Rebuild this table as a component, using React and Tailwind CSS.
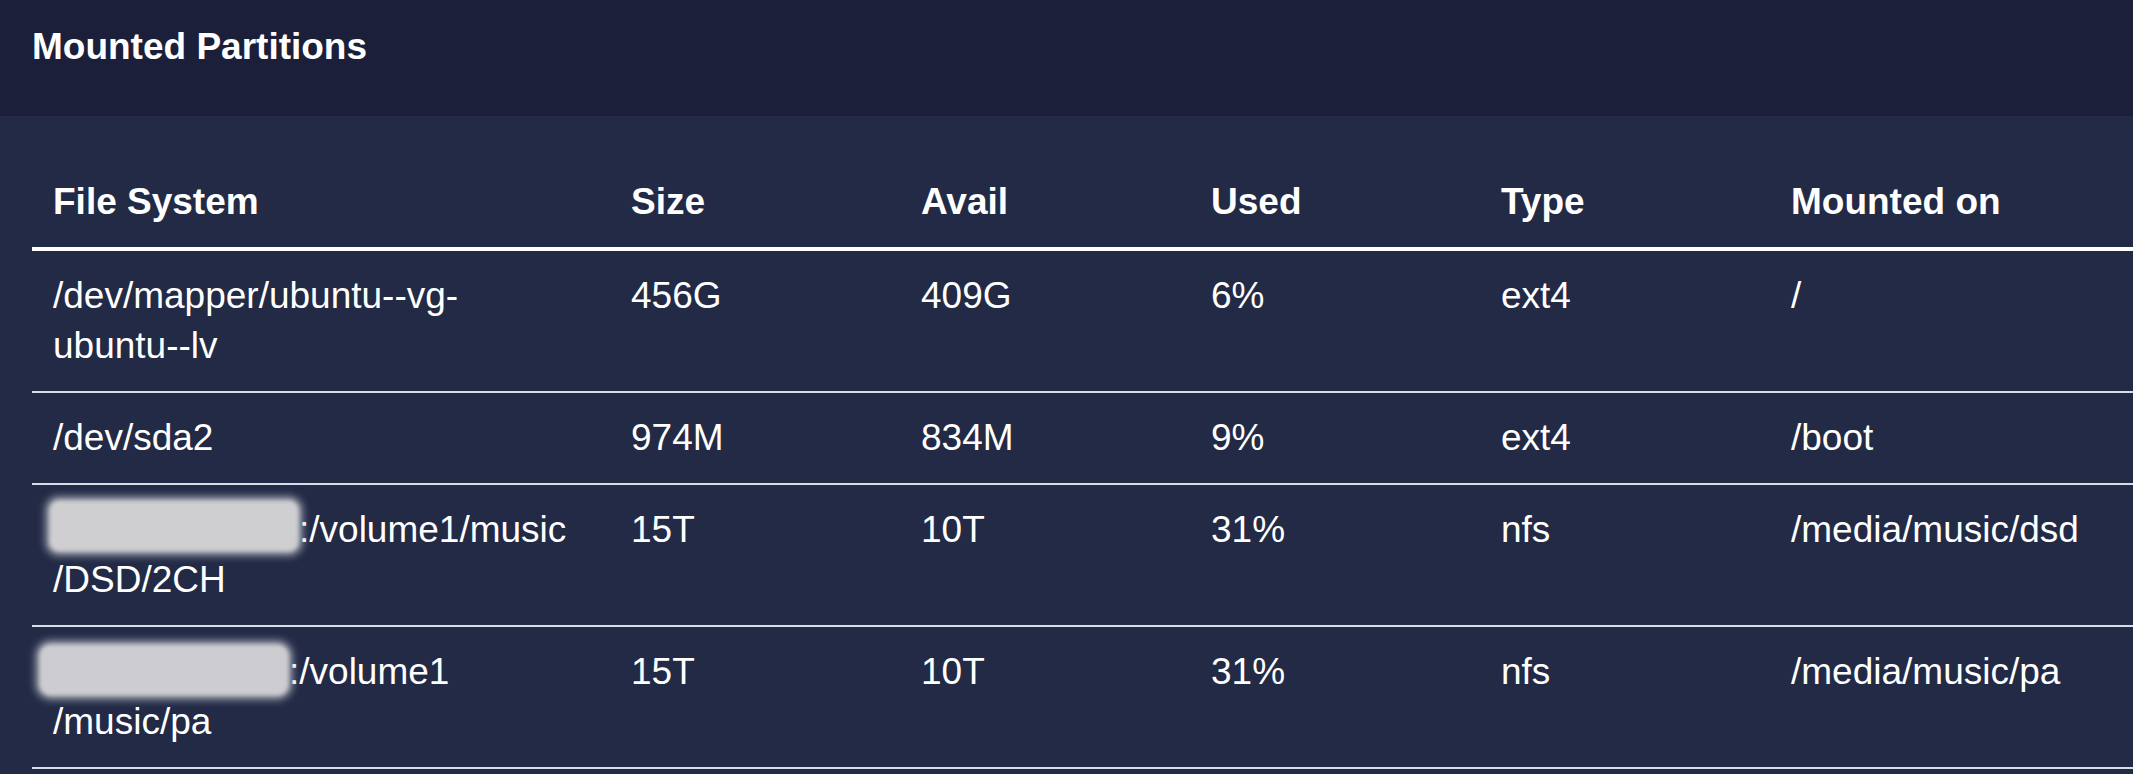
import React from 'react';

const rows = [
  {
    fs: ['/dev/mapper/ubuntu--vg-', 'ubuntu--lv'],
    size: '456G',
    avail: '409G',
    used: '6%',
    type: 'ext4',
    mount: '/',
  },
  {
    fs: ['/dev/sda2'],
    size: '974M',
    avail: '834M',
    used: '9%',
    type: 'ext4',
    mount: '/boot',
  },
  {
    redact: 'row3',
    fs: [':/volume1/music', '/DSD/2CH'],
    size: '15T',
    avail: '10T',
    used: '31%',
    type: 'nfs',
    mount: '/media/music/dsd',
  },
  {
    redact: 'row4',
    fs: [':/volume1', '/music/pa'],
    size: '15T',
    avail: '10T',
    used: '31%',
    type: 'nfs',
    mount: '/media/music/pa',
  },
];

// gray smudge over the hidden host address
const Redacted = ({ wide }) => (
  <span
    className={
      wide
        ? 'inline-block align-top h-[52px] w-[250px] -ml-[14px] -mt-[3px] rounded-[12px] bg-[#cdcdd1] blur-[2px] shadow-[0_0_6px_4px_rgba(190,192,200,0.7)]'
        : 'inline-block align-top h-[52px] w-[250px] -ml-[4px] -mt-[5px] rounded-[10px] bg-[#cfcfd2] blur-[2px] shadow-[0_0_6px_4px_rgba(190,192,200,0.7)]'
    }
  />
);

const Cell = ({ children, className = '' }) => (
  <td className={`align-top px-[21px] py-[20px] ${className}`}>{children}</td>
);

export default function App() {
  return (
    <div
      className="min-h-screen bg-[#222a46] text-white"
      style={{ fontFamily: '"Liberation Sans", Arial, sans-serif' }}
    >
      <div className="h-[116px] bg-[#1c1f3a] px-[32px] pt-[25px]">
        <h2 className="text-[37px] font-bold leading-[43px]">Mounted Partitions</h2>
      </div>

      <div className="pl-[32px] pt-[41px]">
        <table className="w-full table-fixed border-collapse text-[37px] leading-[50px]">
          <thead>
            <tr className="border-b-[4px] border-white">
              <th className="w-[578px] px-[21px] py-[20px] text-left font-bold">File System</th>
              <th className="w-[290px] px-[21px] py-[20px] text-left font-bold">Size</th>
              <th className="w-[290px] px-[21px] py-[20px] text-left font-bold">Avail</th>
              <th className="w-[290px] px-[21px] py-[20px] text-left font-bold">Used</th>
              <th className="w-[290px] px-[21px] py-[20px] text-left font-bold">Type</th>
              <th className="px-[21px] py-[20px] text-left font-bold">Mounted on</th>
            </tr>
          </thead>
          <tbody>
            {rows.map((r, i) => (
              <tr key={i} className="border-b-[2px] border-[#d6dde9]">
                <Cell>
                  {r.redact && <Redacted wide={r.redact === 'row4'} />}
                  {r.fs.map((line, j) => (
                    <React.Fragment key={j}>
                      {j > 0 && <br />}
                      {line}
                    </React.Fragment>
                  ))}
                </Cell>
                <Cell>{r.size}</Cell>
                <Cell>{r.avail}</Cell>
                <Cell>{r.used}</Cell>
                <Cell>{r.type}</Cell>
                <Cell>{r.mount}</Cell>
              </tr>
            ))}
          </tbody>
        </table>
      </div>
    </div>
  );
}
